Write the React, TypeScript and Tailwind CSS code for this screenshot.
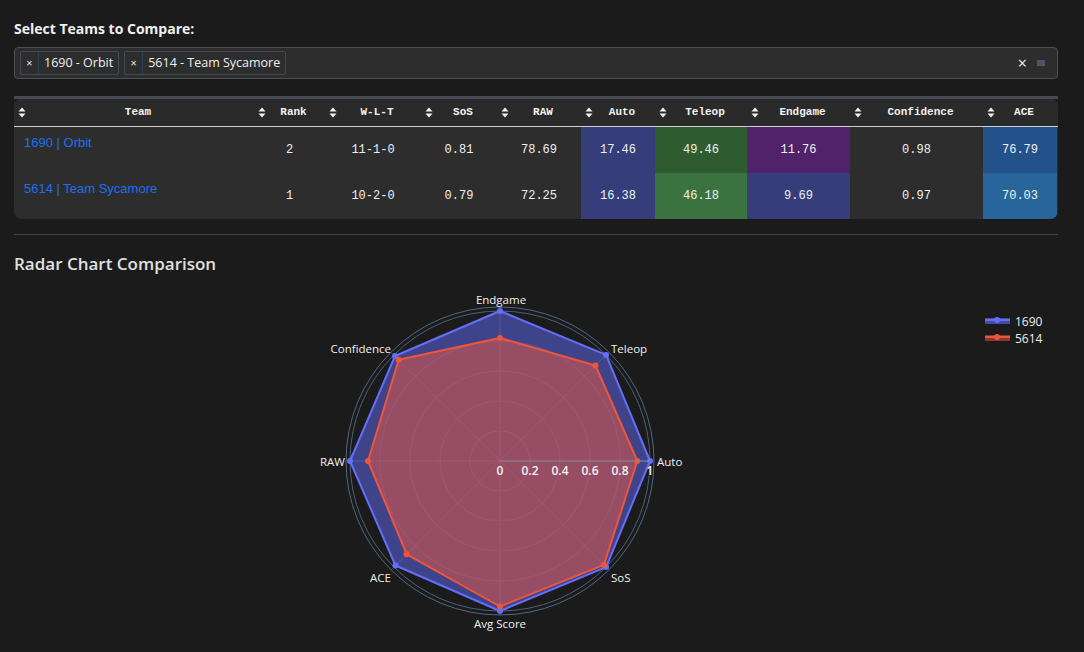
import React from "react"

const cols = ["Team", "Rank", "W-L-T", "SoS", "RAW", "Auto", "Teleop", "Endgame", "Confidence", "ACE"]

const rows = [
  {
    team: "1690 | Orbit",
    cells: ["2", "11-1-0", "0.81", "78.69", "17.46", "49.46", "11.76", "0.98", "76.79"],
    bg: ["", "", "", "", "bg-[#353e7a]", "bg-[#2e5b30]", "bg-[#51226a]", "", "bg-[#23528a]"],
  },
  {
    team: "5614 | Team Sycamore",
    cells: ["1", "10-2-0", "0.79", "72.25", "16.38", "46.18", "9.69", "0.97", "70.03"],
    bg: ["", "", "", "", "bg-[#353e7a]", "bg-[#3a7340]", "bg-[#353e7a]", "", "bg-[#27659a]"],
  },
]

const gridCols = "grid grid-cols-[240px_71px_96px_76px_84px_74px_92px_103px_133px_74px]"

function SortIcon() {
  return (
    <svg width="8" height="11" viewBox="0 0 8 11" className="shrink-0">
      <path d="M4 0.5 L7.5 4.5 L0.5 4.5 Z" fill="#f2f2f2" />
      <path d="M4 10.5 L7.5 6.5 L0.5 6.5 Z" fill="#f2f2f2" />
    </svg>
  )
}

function Chip({ label }: { label: string }) {
  return (
    <div className="flex h-[24px] items-stretch rounded-[2px] border border-[#434852] text-[12.5px] text-[#f0f0f0]">
      <span className="flex w-[18px] items-center justify-center border-r border-[#27405e] text-[11px] text-[#e8e8e8]">×</span>
      <span className="flex items-center px-[5px]">{label}</span>
    </div>
  )
}

// radar geometry
const CX = 486
const CY = 182
const R = 150
const axes = [
  { name: "Auto", a: 0 },
  { name: "Teleop", a: 45 },
  { name: "Endgame", a: 90 },
  { name: "Confidence", a: 135 },
  { name: "RAW", a: 180 },
  { name: "ACE", a: 225 },
  { name: "Avg Score", a: 270 },
  { name: "SoS", a: 315 },
]
const blue = [1, 1, 1, 0.99, 1, 0.985, 1, 1]
const red = [0.915, 0.9, 0.82, 0.955, 0.88, 0.88, 0.97, 0.98]

function pt(v: number, deg: number) {
  const r = (deg * Math.PI) / 180
  return [CX + v * R * Math.cos(r), CY - v * R * Math.sin(r)]
}

function poly(vals: number[]) {
  return vals.map((v, i) => pt(v, axes[i].a).map((n) => n.toFixed(1)).join(",")).join(" ")
}

function Radar() {
  const labelPos: { x: number; y: number; anchor: "start" | "middle" | "end" }[] = [
    { x: 643, y: 182, anchor: "start" },
    { x: 597, y: 69, anchor: "start" },
    { x: 487, y: 20, anchor: "middle" },
    { x: 377, y: 69, anchor: "end" },
    { x: 331, y: 182, anchor: "end" },
    { x: 377, y: 298, anchor: "end" },
    { x: 486, y: 344, anchor: "middle" },
    { x: 597, y: 298, anchor: "start" },
  ]
  return (
    <svg width="1044" height="372" viewBox="0 0 1044 372" style={{ fontFamily: "'Open Sans', 'Liberation Sans', sans-serif" }}>
      {/* grid */}
      {[0.2, 0.4, 0.6, 0.8, 1].map((g) => (
        <circle key={g} cx={CX} cy={CY} r={g * R} fill="none" stroke="#506784" strokeOpacity={g === 1 ? 0.9 : 0.55} strokeWidth="1" />
      ))}
      <circle cx={CX} cy={CY} r={154} fill="none" stroke="#506784" strokeWidth="1" />
      {axes.map((ax) => {
        const [x, y] = pt(154 / R, ax.a)
        return <line key={ax.name} x1={CX} y1={CY} x2={x} y2={y} stroke="#506784" strokeOpacity="0.55" strokeWidth="1" />
      })}
      {/* traces */}
      <polygon points={poly(blue)} fill="rgba(99,110,250,0.5)" stroke="#636efa" strokeWidth="2" strokeLinejoin="round" />
      <polygon points={poly(red)} fill="rgba(239,85,59,0.5)" stroke="#ef553b" strokeWidth="2" strokeLinejoin="round" />
      {blue.map((v, i) => {
        const [x, y] = pt(v, axes[i].a)
        return <circle key={"b" + i} cx={x} cy={y} r="3" fill="#636efa" />
      })}
      {red.map((v, i) => {
        const [x, y] = pt(v, axes[i].a)
        return <circle key={"r" + i} cx={x} cy={y} r="3" fill="#ef553b" />
      })}
      <line x1={CX} y1={CY} x2={CX + R} y2={CY} stroke="#7f8796" strokeWidth="1" />
      {/* radial ticks */}
      {["0", "0.2", "0.4", "0.6", "0.8", "1"].map((t, i) => (
        <text key={t} x={CX + i * 30} y={CY + 9} fontSize="12" fontWeight="600" fill="#f2f2f2" textAnchor="middle" dominantBaseline="central">
          {t}
        </text>
      ))}
      {/* angular labels */}
      {axes.map((ax, i) => (
        <text key={ax.name} x={labelPos[i].x} y={labelPos[i].y} fontSize="11.5" fontWeight="500" fill="#f0f0f0" textAnchor={labelPos[i].anchor} dominantBaseline="central">
          {ax.name}
        </text>
      ))}
      {/* legend */}
      <rect x="971" y="39" width="25" height="6" fill="rgba(99,110,250,0.6)" />
      <line x1="971" y1="41" x2="996" y2="41" stroke="#636efa" strokeWidth="2" />
      <circle cx="983" cy="41" r="3" fill="#636efa" />
      <text x="1001" y="42" fontSize="12" fill="#eeeeee" dominantBaseline="central">1690</text>
      <rect x="971" y="56" width="25" height="6" fill="rgba(239,85,59,0.5)" />
      <line x1="971" y1="58" x2="996" y2="58" stroke="#ef553b" strokeWidth="2" />
      <circle cx="983" cy="58" r="3" fill="#ef553b" />
      <text x="1001" y="59" fontSize="12" fill="#eeeeee" dominantBaseline="central">5614</text>
    </svg>
  )
}

export default function App() {
  return (
    <div className="min-h-[652px] bg-[#1b1b1b] pl-[14px] pr-[26px] pt-[19px] font-['Open_Sans','Liberation_Sans',sans-serif] text-[#eeeeee]">
      <div className="text-[14px] font-bold leading-[20px] text-[#f0f0f0]">Select Teams to Compare:</div>

      <div className="mt-[8px] flex h-[32px] items-center rounded-[4px] border border-[#4e4f53] bg-[#2d2d2d] pl-[5px] pr-[12px]">
        <div className="flex gap-[5px]">
          <Chip label="1690 - Orbit" />
          <Chip label="5614 - Team Sycamore" />
        </div>
        <div className="ml-auto flex items-center gap-[10px]">
          <span className="text-[16px] leading-none text-[#eeeeee]">×</span>
          <span className="h-[6px] w-[8px] bg-[#4f5663]" />
        </div>
      </div>

      <div className="mt-[17px] h-[3px] bg-[#474a50]" />
      <div className="overflow-hidden rounded-b-[8px] rounded-t-[6px] bg-[#2d2d2d] font-['Liberation_Mono',monospace]">
        <div className={`${gridCols} h-[28px] border-b-[1.5px] border-[#d0d0d0] bg-[#2a2a2a]`}>
          {cols.map((c) => (
            <div key={c} className="flex items-center pl-[4px] pr-[4px]">
              <SortIcon />
              <span className="flex-1 text-center text-[11px] font-bold text-[#f2f2f2]">{c}</span>
            </div>
          ))}
        </div>
        {rows.map((r) => (
          <div key={r.team} className={`${gridCols} h-[46px]`}>
            <div className="pl-[10px] pt-[8px] font-['Liberation_Sans',Arial,sans-serif] text-[13px] leading-[16px] text-[#1e6ff0]">
              {r.team}
            </div>
            {r.cells.map((c, i) => (
              <div key={i} className={`flex items-center justify-center text-[12px] text-[#f0f0f0] ${r.bg[i]}`}>
                {c}
              </div>
            ))}
          </div>
        ))}
      </div>

      <div className="mt-[15px] h-px bg-[#444444]" />
      <div className="mt-[17px] text-[17px] font-semibold leading-[24px] text-[#e0e0e0]">Radar Chart Comparison</div>
      <div className="mt-[3px]">
        <Radar />
      </div>
    </div>
  )
}
